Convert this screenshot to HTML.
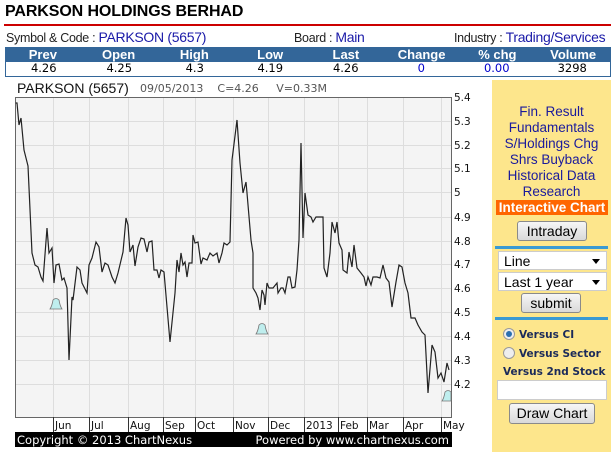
<!DOCTYPE html>
<html><head><meta charset="utf-8"><style>
*{margin:0;padding:0;box-sizing:border-box}
body{width:611px;height:452px;background:#fff;font-family:"Liberation Sans",Arial,sans-serif;position:relative;overflow:hidden}
.a{position:absolute;white-space:nowrap}
.tbl{position:absolute;left:5px;width:606px;display:flex}
.tbl div{width:75.75px;text-align:center}
.side{position:absolute;left:492px;top:80px;width:119px;height:372px;background:#fde68c}
.lk{position:absolute;left:0;width:119px;text-align:center;color:#1a1a9c;font-size:13.5px}
.btn{position:absolute;background:linear-gradient(#f6f6f6,#d9d9d9);border:1px solid #8a8a8a;border-radius:3px;text-align:center;font-size:14px;color:#000}
.sel{position:absolute;left:6px;width:109px;height:19px;background:#fff;border:1px solid #ccc;font-size:14px;padding-left:5px;line-height:18px}
.sel:after{content:"";position:absolute;right:6px;top:7px;border:4px solid transparent;border-top:5px solid #000}
.sep{position:absolute;left:3px;width:113px;height:3px;background:#3a9ad3}
.rad{position:absolute;left:11px;font-size:10.5px;font-weight:bold;color:#1a2a5a;font-family:"DejaVu Sans",sans-serif}
.rad i{display:inline-block;width:12px;height:12px;border-radius:50%;border:1px solid #999;background:#eee;vertical-align:-2px;margin-right:4px;position:relative}
</style></head><body>
<div class="a" style="left:5px;top:3px;font-size:16px;font-weight:bold;letter-spacing:-0.1px">PARKSON HOLDINGS BERHAD</div>
<div class="a" style="left:4px;top:24px;width:607px;height:2px;background:#cc0000"></div>
<div class="a" style="left:6px;top:29px;font-size:12.5px;color:#222;letter-spacing:-0.3px">Symbol &amp; Code : <span style="color:#1a1aa8;font-size:14px">PARKSON (5657)</span></div>
<div class="a" style="left:294px;top:29px;font-size:12.5px;color:#222;letter-spacing:-0.3px">Board : <span style="color:#1a1aa8;font-size:14px">Main</span></div>
<div class="a" style="left:454px;top:29px;font-size:12.5px;color:#222;letter-spacing:-0.3px">Industry : <span style="color:#1a1aa8;font-size:14px">Trading/Services</span></div>
<div class="tbl" style="top:47px;height:15px;background:#336699;color:#fff;font-weight:bold;font-size:13px;line-height:15px"><div>Prev</div><div>Open</div><div>High</div><div>Low</div><div>Last</div><div>Change</div><div>% chg</div><div>Volume</div></div>
<div class="tbl" style="top:62px;height:15px;border:1px solid #336699;border-top:0;font-size:11.5px;line-height:13px;font-family:'DejaVu Sans',sans-serif"><div>4.26</div><div>4.25</div><div>4.3</div><div>4.19</div><div>4.26</div><div style="color:#00c">0</div><div style="color:#00c">0.00</div><div>3298</div></div>
<div class="a" style="left:17px;top:80px;font-size:14px;color:#111">PARKSON (5657)</div>
<div class="a" style="left:140px;top:82px;font-size:11px;color:#555;font-family:'DejaVu Sans',sans-serif">09/05/2013 &nbsp;&nbsp;&nbsp;C=4.26 &nbsp;&nbsp;&nbsp;&nbsp;V=0.33M</div>
<svg class="a" style="left:0;top:0" width="492" height="452">
<rect x="15.5" y="97.5" width="436" height="320" fill="#f4f4f4" stroke="#666"/>
<g stroke="#ddd" stroke-width="1">
<path d="M16 121.5H451M16 145.5H451M16 168.5H451M16 192.5H451M16 217.5H451M16 241.5H451M16 264.5H451M16 288.5H451M16 312.5H451M16 336.5H451M16 360.5H451M16 384.5H451"/>
<path d="M53.5 98V417M89.5 98V417M128.5 98V417M163.5 98V417M195.5 98V417M233.5 98V417M268.5 98V417M304.5 98V417M338.5 98V417M367.5 98V417M403.5 98V417M441.5 98V417"/>
</g>
<g stroke="#333" stroke-width="1"><path d="M53.5 417V432M89.5 417V432M128.5 417V432M163.5 417V432M195.5 417V432M233.5 417V432M268.5 417V432M304.5 417V432M338.5 417V432M367.5 417V432M403.5 417V432M441.5 417V432"/></g>
<polyline fill="none" stroke="#222" stroke-width="1.2" points="15.7,103 17,103 19,125 21,118 24,150 28,166 32,253 35,265 38,267 41,277 43,281 47,228 49,253 52,248 54,283 56,265 59,264 62,280 64,278 67,288 69,360 72,297 73,300 77,267 80,270 82,283 87,293 89,265 92,258 96,242 99,247 102,272 105,263 108,265 112,277 115,283 118,273 123,252 126,218 128,225 130,252 133,245 135,266 138,247 141,238 144,239 147,252 149,242 152,241 154,270 157,270 159,278 161,270 164,272 167,307 170,342 175,293 177,260 179,272 181,253 183,265 185,262 187,277 189,263 192,263 193,235 195,243 198,242 201,264 203,258 207,260 210,253 213,256 217,253 219,263 222,253 224,243 227,245 230,242 232,160 237,120 240,163 243,193 246,182 247,193 251,240 253,253 253,288 256,293 258,298 260,310 262,290 264,295 265,305 267,283 269,288 273,288 277,283 278,293 281,288 283,288 285,293 288,277 290,277 292,288 295,287 297,270 299,240 301,143 303,238 305,193 308,215 311,217 313,222 316,217 320,217 323,217 324,268 327,277 330,253 332,222 335,233 337,222 339,243 342,250 343,270 347,273 349,252 352,267 354,245 357,268 361,273 364,277 366,286 368,277 371,285 373,277 377,277 380,278 383,265 386,278 389,282 392,307 396,282 399,265 402,267 405,283 408,293 411,318 415,318 418,325 422,332 425,335 428,393 432,345 435,352 438,378 441,373 444,382 447,363 449,370"/>
<g fill="#bfeeee" stroke="#777" stroke-width="0.8">
<path d="M50 309 Q52 306 53 300 Q56 297 59 300 Q60 306 62 309 Z"/><path d="M256 334 Q258 331 259 325 Q262 322 265 325 Q266 331 268 334 Z"/><path d="M442 401 Q444 398 445 392 Q448 389 451 392 L451 401 Z"/>
</g>
<g font-size="10.5" fill="#111" font-family="DejaVu Sans,sans-serif">
<text x="454" y="101">5.4</text><text x="454" y="125">5.3</text><text x="454" y="149">5.2</text><text x="454" y="172">5.1</text><text x="454" y="196">5</text><text x="454" y="221">4.9</text><text x="454" y="245">4.8</text><text x="454" y="268">4.7</text><text x="454" y="292">4.6</text><text x="454" y="316">4.5</text><text x="454" y="340">4.4</text><text x="454" y="364">4.3</text><text x="454" y="388">4.2</text>
<text x="55" y="429">Jun</text><text x="91" y="429">Jul</text><text x="130" y="429">Aug</text><text x="165" y="429">Sep</text><text x="197" y="429">Oct</text><text x="235" y="429">Nov</text><text x="270" y="429">Dec</text><text x="306" y="429">2013</text><text x="340" y="429">Feb</text><text x="369" y="429">Mar</text><text x="405" y="429">Apr</text><text x="443" y="429">May</text>
</g>
<rect x="15" y="432" width="437" height="15" fill="#000"/>
<text x="17" y="444" fill="#fff" font-size="11.5" font-family="DejaVu Sans,sans-serif">Copyright © 2013 ChartNexus</text>
<text x="449" y="444" fill="#fff" font-size="11.5" font-family="DejaVu Sans,sans-serif" text-anchor="end">Powered by www.chartnexus.com</text>
</svg>
<div class="side">
<div class="lk" style="top:24px">Fin. Result</div>
<div class="lk" style="top:40px">Fundamentals</div>
<div class="lk" style="top:56px">S/Holdings Chg</div>
<div class="lk" style="top:72px">Shrs Buyback</div>
<div class="lk" style="top:88px">Historical Data</div>
<div class="lk" style="top:104px">Research</div>
<div class="a" style="left:4px;top:120px;width:112px;height:15px;background:#ff6600;color:#fff;font-weight:bold;font-size:13.5px;text-align:center;line-height:15px">Interactive Chart</div>
<div class="btn" style="left:25px;top:141px;width:70px;height:20px;line-height:18px">Intraday</div>
<div class="sep" style="top:166px"></div>
<div class="sel" style="top:171px">Line</div>
<div class="sel" style="top:192px">Last 1 year</div>
<div class="btn" style="left:29px;top:213px;width:60px;height:20px;line-height:18px">submit</div>
<div class="sep" style="top:237px"></div>
<div class="rad" style="top:248px"><i><b style="position:absolute;left:2px;top:2px;width:6px;height:6px;border-radius:50%;background:#2a6fb0"></b></i>Versus CI</div>
<div class="rad" style="top:267px"><i></i>Versus Sector</div>
<div class="rad" style="top:286px;left:11px">Versus 2nd Stock</div>
<div class="a" style="left:5px;top:300px;width:110px;height:20px;background:#fff;border:1px solid #ccc"></div>
<div class="btn" style="left:17px;top:323px;width:86px;height:21px;line-height:19px">Draw Chart</div>
</div>
</body></html>
